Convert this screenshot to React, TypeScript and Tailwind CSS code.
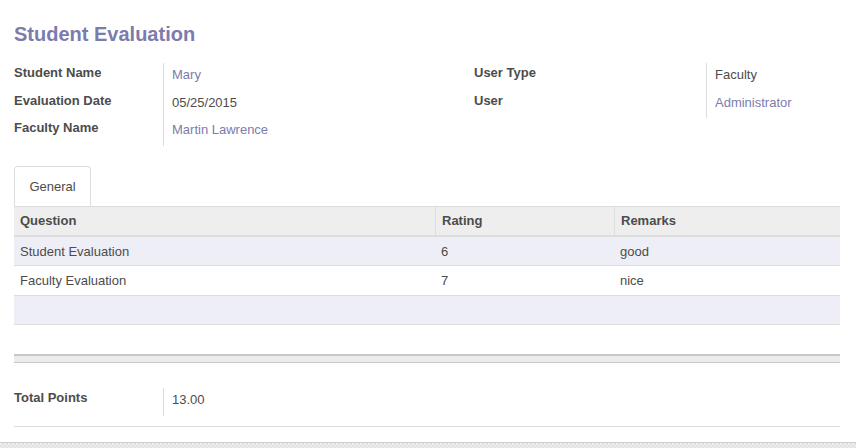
import React from "react";

const purple = "text-[#7c7bad]";

type Field = { label: string; value: string; link?: boolean };

const leftFields: Field[] = [
  { label: "Student Name", value: "Mary", link: true },
  { label: "Evaluation Date", value: "05/25/2015" },
  { label: "Faculty Name", value: "Martin Lawrence", link: true },
];

const rightFields: Field[] = [
  { label: "User Type", value: "Faculty" },
  { label: "User", value: "Administrator", link: true },
];

const rows = [
  { q: "Student Evaluation", rating: "6", remarks: "good" },
  { q: "Faculty Evaluation", rating: "7", remarks: "nice" },
];

function FieldGroup({ fields, labelWidth }: { fields: Field[]; labelWidth: string }) {
  return (
    <div className="flex">
      <div className={`${labelWidth} shrink-0`}>
        {fields.map((f) => (
          <div key={f.label} className="h-[27.5px] font-bold leading-5">
            {f.label}
          </div>
        ))}
      </div>
      <div className="border-l border-[#dcdcdc] pl-2">
        {fields.map((f) => (
          <div
            key={f.label}
            className={`h-[27.5px] pt-[2px] leading-5 ${f.link ? purple : ""}`}
          >
            {f.value}
          </div>
        ))}
      </div>
    </div>
  );
}

export default function App() {
  return (
    <div className="flex h-[448px] flex-col bg-white font-['Liberation_Sans',Arial,sans-serif] text-[13px] text-[#4c4c4c]">
      <div className="flex-1 pl-[14px] pr-[16px]">
        <h1 className={`pt-[22px] text-[20px] font-bold leading-6 ${purple}`}>
          Student Evaluation
        </h1>

        <div className="mt-[17px] flex items-start">
          <div className="w-[460px] shrink-0">
            <FieldGroup fields={leftFields} labelWidth="w-[149px]" />
          </div>
          <FieldGroup fields={rightFields} labelWidth="w-[232px]" />
        </div>

        <div className="mt-[20px] flex">
          <div className="h-10 w-[77px] rounded-t border border-b-0 border-[#dddddd] pt-[10px] text-center leading-5">
            General
          </div>
        </div>

        <div className="flex h-[31px] border-t border-b-2 border-[#dddddd] bg-[#eeeeee] font-bold">
          <div className="w-[421px] px-[6px] pt-1 leading-5">Question</div>
          <div className="w-[179px] border-l border-[#dddddd] px-[6px] pt-1 leading-5">Rating</div>
          <div className="flex-1 border-l border-[#dddddd] px-[6px] pt-1 leading-5">Remarks</div>
        </div>
        {rows.map((r, i) => (
          <div
            key={r.q}
            className={`flex h-[29.5px] items-center border-b border-[#dddddd] pt-[1px] ${i % 2 === 0 ? "bg-[#eeeef7]" : "bg-white"}`}
          >
            <div className="w-[421px] px-[6px]">{r.q}</div>
            <div className="w-[179px] px-[6px]">{r.rating}</div>
            <div className="flex-1 px-[6px]">{r.remarks}</div>
          </div>
        ))}
        <div className="h-[29.5px] border-b border-[#dddddd] bg-[#eeeef7]" />

        <div className="mt-[29px] h-[9px] border-t-2 border-b border-[#c8c8c8] bg-[#ececec]" />

        <div className="mt-[25px] border-b border-[#dddddd] pb-[10px]">
          <div className="flex h-[28px]">
            <div className="w-[149px] shrink-0 font-bold leading-5">Total Points</div>
            <div className="border-l border-[#dcdcdc] pl-2 pt-[2px] leading-5">13.00</div>
          </div>
        </div>
      </div>
      <div className="h-[6px] border-t border-[#cfcfcf] bg-[repeating-conic-gradient(#dedede_0_25%,#efefef_0_50%)] bg-[length:4px_4px]" />
    </div>
  );
}
